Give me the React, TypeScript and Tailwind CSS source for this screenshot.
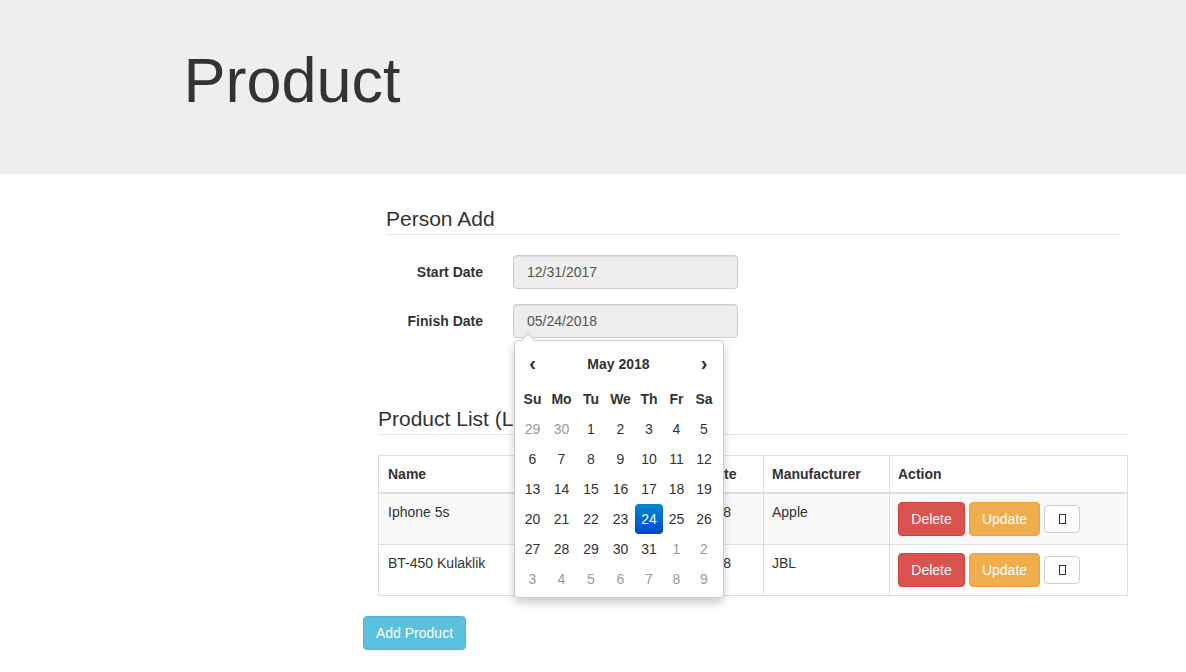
const weeks = [
  [29, 30, 1, 2, 3, 4, 5],
  [6, 7, 8, 9, 10, 11, 12],
  [13, 14, 15, 16, 17, 18, 19],
  [20, 21, 22, 23, 24, 25, 26],
  [27, 28, 29, 30, 31, 1, 2],
  [3, 4, 5, 6, 7, 8, 9],
];

const dayNames = ['Su', 'Mo', 'Tu', 'We', 'Th', 'Fr', 'Sa'];
const colWidths = [29, 29, 30, 29, 28, 27, 28];

const products = [
  { name: 'Iphone 5s', start: '12/31/2017', finish: '05/24/2018', maker: 'Apple', striped: true },
  { name: 'BT-450 Kulaklik', start: '12/31/2017', finish: '05/24/2018', maker: 'JBL', striped: false },
];

function Datepicker() {
  return (
    <div className="absolute left-px top-[36px] z-10 h-[258px] w-[210px] rounded border border-[#ccc] bg-white py-1 pl-[3px] pr-1 shadow-[0_5px_10px_rgba(0,0,0,0.2)]">
      <div className="absolute left-[8px] top-[-6px] h-[10px] w-[10px] rotate-45 border-l border-t border-[#ccc] bg-white" />
      <table className="relative w-[199px] table-fixed border-collapse text-center text-[14px] text-[#333]">
        <colgroup>
          {colWidths.map((w, i) => (
            <col key={i} style={{ width: w }} />
          ))}
        </colgroup>
        <thead>
          <tr className="h-[39px] font-bold">
            <th className="pb-[4px] text-[20px] font-bold leading-none">‹</th>
            <th colSpan={5} className="font-bold">May 2018</th>
            <th className="pb-[4px] text-[20px] font-bold leading-none">›</th>
          </tr>
          <tr className="h-[30px]">
            {dayNames.map((d) => (
              <th key={d} className="font-bold">{d}</th>
            ))}
          </tr>
        </thead>
        <tbody>
          {weeks.map((week, r) => (
            <tr key={r} className="h-[30px]">
              {week.map((day, c) => {
                const muted = (r === 0 && day > 20) || (r >= 4 && day < 20);
                if (r === 3 && day === 24) {
                  return (
                    <td key={c} className="rounded bg-gradient-to-b from-[#0088cc] to-[#0044cc] text-white">
                      {day}
                    </td>
                  );
                }
                return (
                  <td key={c} className={muted ? 'text-[#999]' : ''}>
                    {day}
                  </td>
                );
              })}
            </tr>
          ))}
        </tbody>
      </table>
    </div>
  );
}

function DateField({ label, value, open }: { label: string; value: string; open?: boolean }) {
  return (
    <div className="flex items-center">
      <label className="w-[97px] text-right text-[14px] font-bold text-[#333]">{label}</label>
      <div className="relative ml-[30px] w-[225px]">
        <div className="flex h-[34px] items-center rounded border border-[#ccc] bg-[#eee] px-[13px] text-[14px] text-[#555] shadow-[inset_0_1px_1px_rgba(0,0,0,0.075)]">
          {value}
        </div>
        {open && <Datepicker />}
      </div>
    </div>
  );
}

function Legend({ children }: { children: string }) {
  return (
    <div className="h-[32px] border-b border-[#e5e5e5] text-[21px] leading-[31px] text-[#333]">
      {children}
    </div>
  );
}

export default function App() {
  return (
    <div className="min-h-[672px] overflow-hidden bg-white font-['Liberation_Sans',Arial,sans-serif]">
      <header className="h-[174px] bg-[#eee] pl-[183.5px] pt-[46px]">
        <h1 className="text-[63px] leading-[69px] text-[#333]">Product</h1>
      </header>

      <main className="flex flex-col pt-[29px]">
        <section className="ml-[386px] w-[735px]">
          <Legend>Person Add</Legend>
          <div className="mt-[20px] flex flex-col gap-[15px]">
            <DateField label="Start Date" value="12/31/2017" />
            <DateField label="Finish Date" value="05/24/2018" open />
          </div>
        </section>

        <section className="ml-[378px] mt-[65px] w-[751px]">
          <Legend>Product List (List)</Legend>
          <table className="mt-[20px] w-[749px] table-fixed border-collapse text-left text-[14px] text-[#333]">
            <colgroup>
              <col className="w-[140px]" />
              <col className="w-[134px]" />
              <col className="w-[111px]" />
              <col className="w-[126px]" />
              <col className="w-[238px]" />
            </colgroup>
            <thead>
              <tr className="h-[37px]">
                {['Name', 'Start Date', 'Finish Date', 'Manufacturer', 'Action'].map((h) => (
                  <th key={h} className="border border-b-2 border-[#ddd] px-2 pt-[2px] font-bold first:pl-[9px]">
                    {h}
                  </th>
                ))}
              </tr>
            </thead>
            <tbody>
              {products.map((p) => (
                <tr key={p.name} className={`h-[51px] ${p.striped ? 'bg-[#f9f9f9]' : 'bg-white'}`}>
                  <td className="border border-[#ddd] p-2 pl-[9px] align-top">{p.name}</td>
                  <td className="border border-[#ddd] p-2 align-top">{p.start}</td>
                  <td className="border border-[#ddd] p-2 align-top">{p.finish}</td>
                  <td className="border border-[#ddd] p-2 align-top">{p.maker}</td>
                  <td className="border border-[#ddd] p-2 align-top">
                    <div className="flex items-center gap-1">
                      <button className="h-[34px] w-[67px] rounded border border-[#d43f3a] bg-[#d9534f] pt-px text-[14px] text-white">
                        Delete
                      </button>
                      <button className="h-[34px] w-[71px] rounded border border-[#eea236] bg-[#f0ad4e] pt-px text-[14px] text-white">
                        Update
                      </button>
                      <button className="flex h-[28px] w-[36px] items-center justify-center rounded border border-[#ccc] bg-white">
                        <span className="h-[10px] w-[7px] border border-[#333]" />
                      </button>
                    </div>
                  </td>
                </tr>
              ))}
            </tbody>
          </table>
        </section>

        <button className="ml-[363px] mt-[20px] h-[34px] w-[103px] rounded border border-[#46b8da] bg-[#5bc0de] pt-px text-[14px] text-white">
          Add Product
        </button>
      </main>
    </div>
  );
}
